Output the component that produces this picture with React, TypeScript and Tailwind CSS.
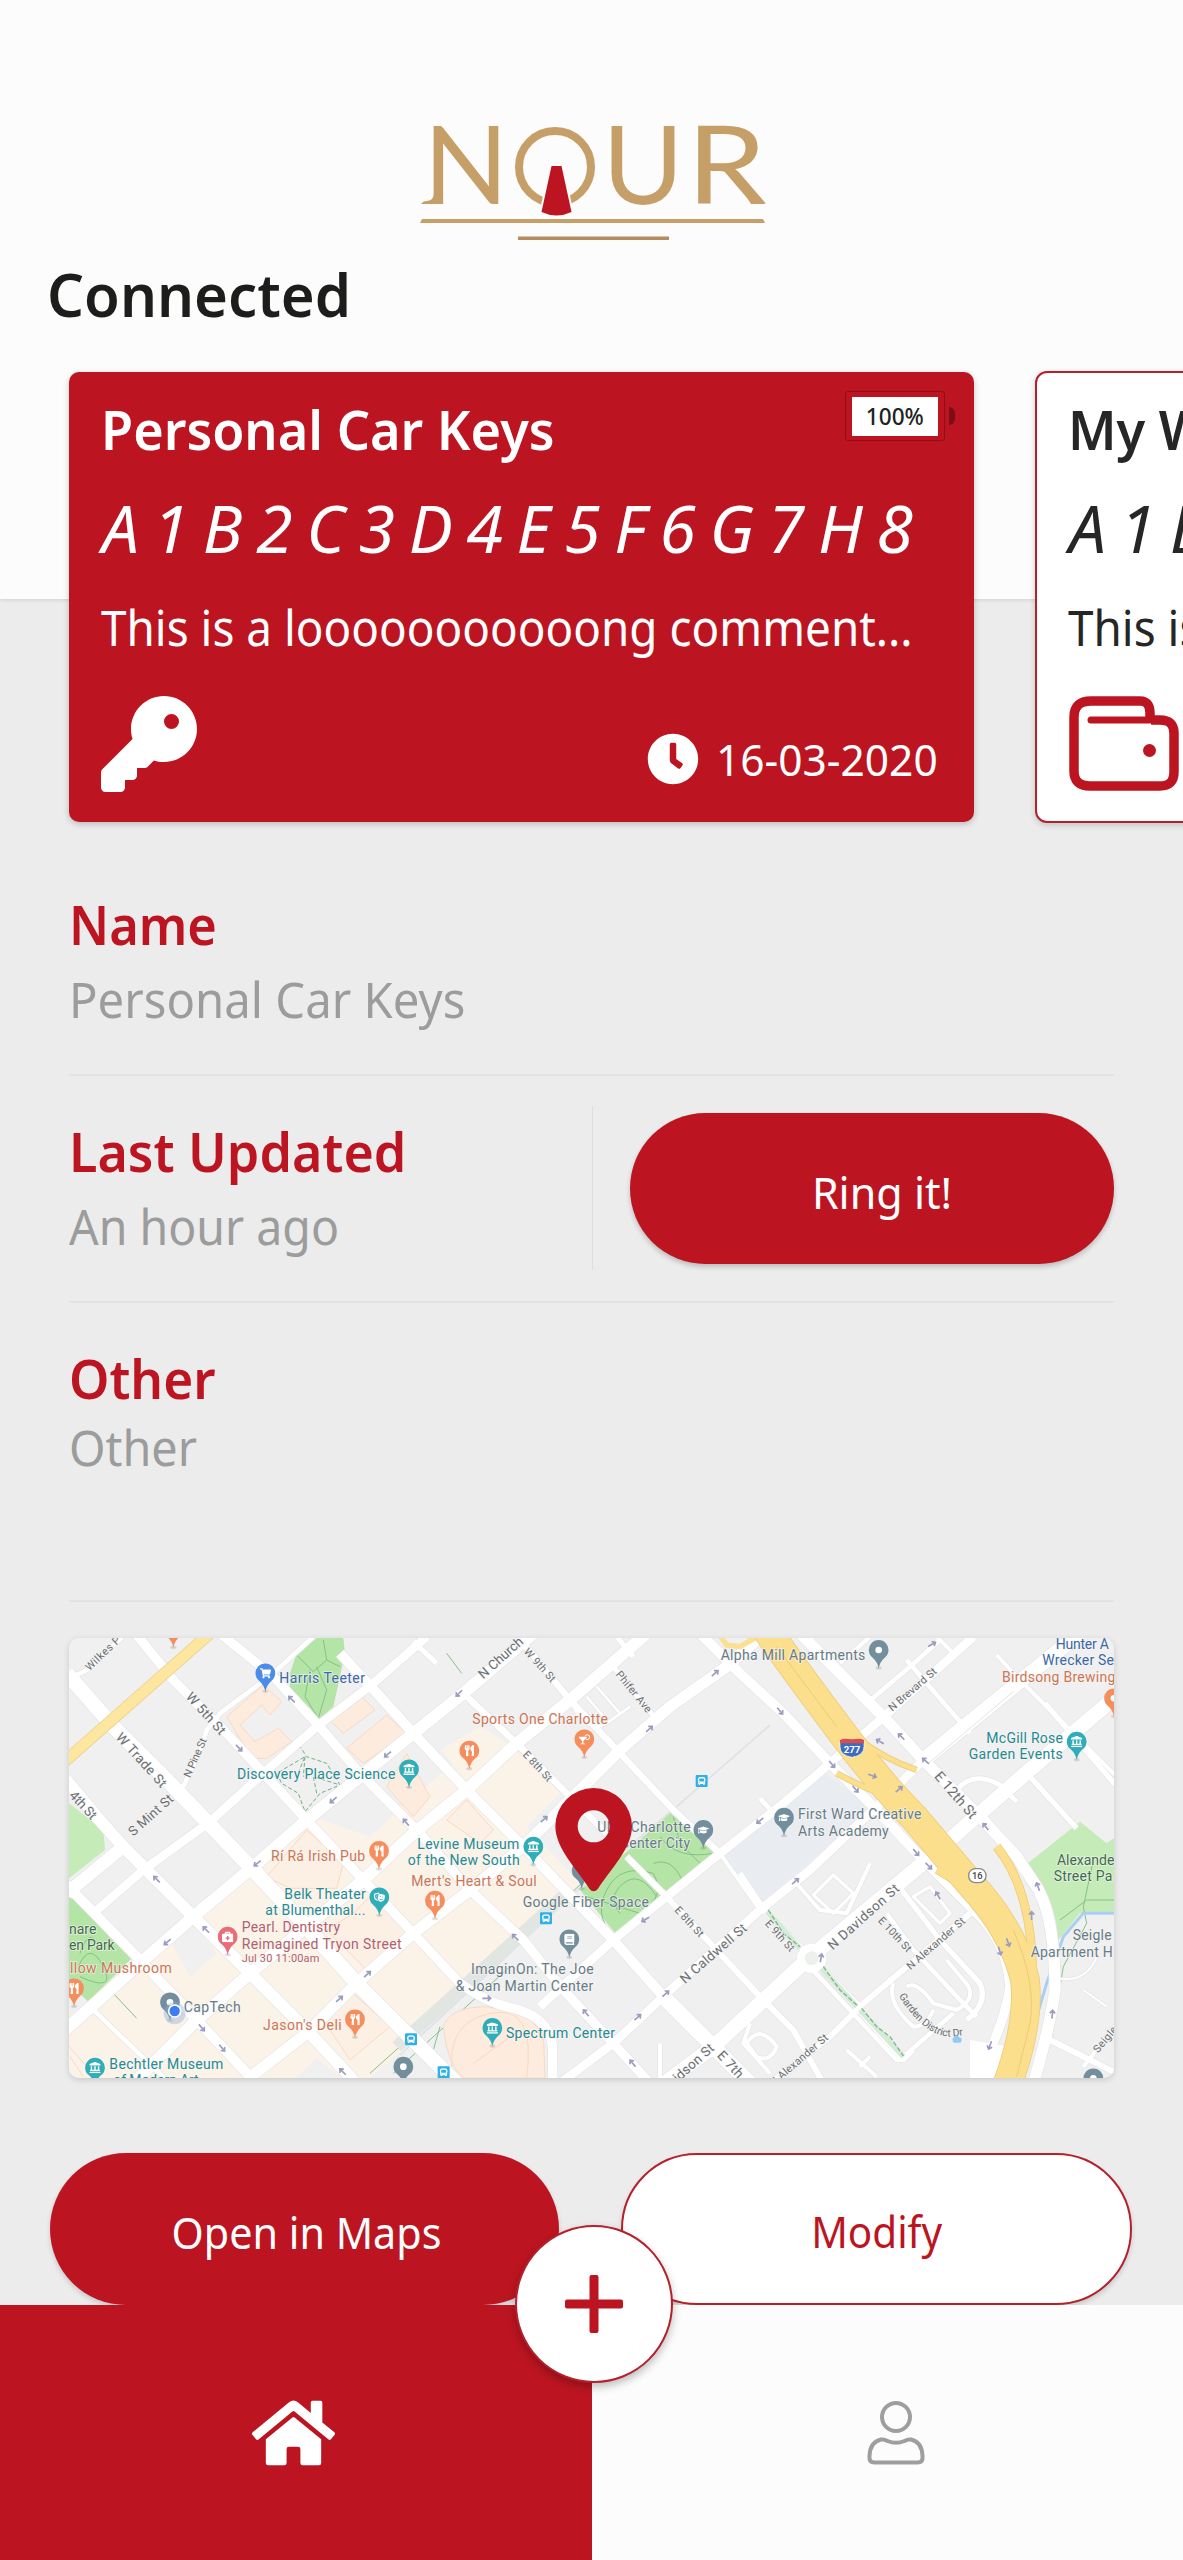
import type { ReactNode } from 'react';
import type { IconType } from 'react-icons';
import { FaBook, FaBriefcaseMedical, FaBus, FaClock, FaCocktail, FaGraduationCap, FaHome, FaLandmark, FaShoppingCart, FaTheaterMasks, FaUtensils } from 'react-icons/fa';
import { FaKey } from 'react-icons/fa6';

const GOLD = '#c69f68';
const RED = '#bc1521';

function Logo() {
  return (
    <svg viewBox="418 120 350 124" className="h-[124px] w-[350px]" fontFamily="Lato, sans-serif" fontSize="108" fill={GOLD}>
      <text x="423.5" y="204" textLength="85" lengthAdjust="spacingAndGlyphs">N</text>
      <circle cx="555" cy="167" r="36" fill="none" stroke={GOLD} strokeWidth="8" />
      <text x="602.5" y="204" textLength="81" lengthAdjust="spacingAndGlyphs">U</text>
      <text x="686.5" y="204" textLength="80" lengthAdjust="spacingAndGlyphs">R</text>
      <path d="M421 204q2-3 6-3 7-1 7-8v11z" />
      <path d="M746 196q6 5 12 5 6 0 7 3h-14z" />
      <path d="M551 166h10l10 46q-15 7-30 0z" transform="translate(.5 0)" fill={RED} stroke="#fcfcfc" strokeWidth="4" paintOrder="stroke" />
      <path d="M422 219h341l2 4h-345z" />
      <path d="M518 236.500h151v3.500h-151z" fill="#b58c60" />
    </svg>
  );
}

function WalletIcon() {
  return (
    <svg viewBox="0 0 110 96" className="ml-px h-[96px] w-[110px]" fill="none" stroke={RED} strokeWidth="9.500" strokeLinejoin="round">
      <path d="M81 25v-8q0-12-10-12H22Q5 5 5 21v54q0 15 16 15h70q14 0 14-14V37q0-13-14-13H82" />
      <path d="M22 24h70" strokeWidth="7" strokeLinecap="round" />
      <circle cx="80.500" cy="54.500" r="6.500" fill={RED} stroke="none" />
    </svg>
  );
}

function UserIcon() {
  return (
    <svg viewBox="0 0 58 64" className="h-[64px] w-[58px]" fill="none" stroke="#9e9e9e" strokeWidth="4">
      <circle cx="29" cy="16" r="14" />
      <path d="M14 38.500Q3 41 2.500 55v2q0 4.500 5 4.500h43q5 0 5-4.500v-2Q55 41 44 38.500q-3-.500-6.500 1.500-8.500 3.500-17 0Q17 38 14 38.500z" strokeLinejoin="round" />
    </svg>
  );
}

function Battery() {
  return (
    <div className="absolute left-[776px] top-[19px] flex items-center gap-1">
      <div className="flex h-[50px] w-[100px] items-center justify-center rounded-[3px] border border-[#8f0f19]">
        <div className="flex h-[39px] w-[86px] items-center justify-center bg-white text-[24px] font-medium leading-none text-[#222]">
          <span className="scale-x-[0.94]">100%</span>
        </div>
      </div>
      <div className="h-[18px] w-[6px] rounded-r-full bg-[#7d0e16]" />
    </div>
  );
}

interface CardProps {
  title: string;
  active?: boolean;
  icon: ReactNode;
}

function DeviceCard({ title, active, icon }: CardProps) {
  return (
    <article
      className={
        active
          ? 'relative mt-px h-[450px] w-[905px] shrink-0 rounded-[10px] bg-[#bc1521] pl-[32px] pr-[36px] pt-[29px] text-white shadow-[0_2px_6px_rgba(0,0,0,0.22)]'
          : 'relative h-[452px] w-[905px] shrink-0 rounded-[12px] border-2 border-[#b4202b] bg-white pl-[31px] pr-[36px] pt-[28px] text-[#262626] shadow-[0_2px_6px_rgba(0,0,0,0.18)]'
      }
    >
      <h2 className="w-max origin-left scale-x-[0.95] text-[55px] font-semibold leading-none">{title}</h2>
      <p className="ml-px mt-[38px] w-max text-[66px] italic leading-none tracking-[13.7px]">A1B2C3D4E5F6G7H8</p>
      <p className="mt-[43px] w-max origin-left scale-x-[0.936] text-[49px] leading-none">This is a looooooooooong comment...</p>
      <div className="mt-[44px] flex items-start justify-between">
        {icon}
        <div className="mt-[37px] flex items-center gap-[9px]">
          <FaClock className="size-[52px]" />
          <span className="origin-right scale-x-[0.965] text-[44px] leading-none">16-03-2020</span>
        </div>
      </div>
      {active && <Battery />}
    </article>
  );
}

const line = (d: string, w: number) => ({ d, w });

const ROADS = [
  line('M20 150L80 120 220 -10', 14),
  line('M210 -10L340 150 500 310 740 570 910 750 1060 910 1200 1060Q1280 1120 1360 1135 1475 1165 1478 1260V1360', 28),
  line('M20 130L160 290 340 470 570 710 730 880 890 1060 1060 1230 1200 1370', 44),
  line('M10 440L110 560 190 650 400 860 570 1030 740 1200 880 1350', 36),
  line('M10 755L240 990 410 1170 580 1350', 30),
  line('M90 1130L330 1360', 14),
  line('M370 470L425 350 440 300 480 250 640 130 760 20', 14),
  line('M480 10L640 140 770 280 900 430 1080 610 1230 780 1390 930 1510 1080 1660 1240 1770 1360', 28),
  line('M840 70L960 200 1060 310 1220 480 1380 640 1660 930 1810 1100', 30),
  line('M1810 1100L1960 1250 2070 1360', 46),
  line('M20 790L190 650', 38),
  line('M100 850L250 720 450 575 610 430 770 290 940 160 1100 20', 26),
  line('M10 1205L240 1000 400 860 580 710 740 570 1060 310 1210 190 1420 10', 36),
  line('M230 1350L400 1180 570 1030 740 890 910 750 1060 610 1220 480 1370 340 1530 210 1760 10', 36),
  line('M560 1350L740 1210 890 1060 1060 910 1230 780 1400 640 1680 360 1830 230 2000 110 2100 20', 34),
  line('M1440 1130L1660 930 1820 800 1980 670 2170 520 2310 400 2460 270 2640 110 2740 20', 26),
  line('M1500 1360L1660 1240 1820 1090 2100 840 2250 720 2450 530 2590 390', 26),
  line('M2590 390L2860 170 3060 10', 44),
  line('M1800 1370L1960 1250 2240 990 2600 690 2760 550 2920 410 3180 190', 44),
  line('M2130 1360L2310 1220 2410 1120 2730 850', 18),
  line('M2530 1280L2680 1150', 14),
  line('M2420 220L2550 110 2640 30', 14),
  line('M2340 100L2430 20', 12),
  line('M2630 20L2690 80', 12),
  line('M1060 35L1130 100', 16),
  line('M1210 190L1370 340 1540 510 1640 610', 20),
  line('M1700 680L1810 790 1960 950 2100 1100 2200 1200 2290 1360', 18),
  line('M1390 40L1530 210 1680 370 1840 540 1980 670', 20),
  line('M1660 110L1790 270', 14),
  line('M1670 20L1720 80', 16),
  line('M1980 670L2100 840', 12),
  line('M2040 730L2120 850 2250 980 2400 1130', 16),
  line('M1920 10L2040 130 2170 250 2310 400 2450 540 2590 690', 30),
  line('M2220 10L2330 120 2470 260 2590 390 2760 560 2870 680 2930 770Q2985 860 2985 1080 2970 1190 2920 1360', 34),
  line('M2590 690L2740 840Q2840 930 2850 1070 2830 1200 2740 1360', 28),
  line('M2280 1010L2530 1290', 16),
  line('M2240 1000L2510 1290 2530 1290 2560 1260', 14),
  line('M2540 90L2730 310', 14),
  line('M2810 75L2880 150 3180 450', 12),
  line('M2955 220L3180 480', 16),
  line('M2910 440L3050 595', 16),
  line('M2690 480Q2740 420 2820 465L2870 515', 14),
  line('M2100 505L2150 560', 14),
  line('M2200 750L2280 840 2360 850 2430 700', 12),
  line('M2510 760L2640 930 2760 1060Q2785 1120 2720 1170', 16),
  line('M2560 800L2610 770 2670 850 2640 880z', 10),
  line('M2480 850L2560 960 2710 1120 2750 1160', 14),
  line('M2500 1060Q2480 1120 2560 1190 2600 1190 2620 1140M2540 1070Q2570 1050 2620 1120L2690 1140Q2760 1100 2710 1050L2660 990', 12),
  line('M2260 795L2320 735 2380 790 2320 850z', 10),
  line('M2060 1240Q2100 1180 2150 1250 2130 1300 2090 1280z', 12),
  line('M2360 1260L2450 1340M2400 1310L2430 1280', 12),
  line('M1800 1344V1240M2070 1180L2050 1240 2130 1330', 12),
  line('M2970 1230L3170 1330', 18),
  line('M3070 1310L3180 1170', 12),
  line('M2990 1045Q3080 1060 3110 980M3070 1080L3140 1130', 6),
  line('M1540 230Q1580 310 1640 280L1710 230M1580 200L1640 270M1610 170L1680 250', 8),
];

const HIGHWAYS = [
  line('M2120 0Q2220 140 2340 300T2560 560L2730 760Q2860 900 2895 1050 2910 1180 2840 1370', 84),
  line('M2400 330Q2480 390 2570 420', 14),
  line('M2330 430Q2400 470 2490 500', 14),
  line('M2630 720Q2790 810 2850 960L2870 1060', 18),
  line('M2810 650Q2900 760 2915 960L2920 1050', 22),
];

const ARROWS: [number, number, number][] = [
  [695, 208, -135], [537, 354, 45], [983, 373, 140], [820, 510, 140], [1038, 577, -130], [592, 700, 140], [290, 748, -135],
  [438, 899, -135], [322, 936, 140], [922, 1033, -42], [838, 1107, -42], [425, 1193, 50], [486, 1254, 50], [848, 1325, -135],
  [1197, 190, 135], [1452, 568, -42], [1768, 297, -42], [1965, 130, -42], [2160, 243, 50], [2616, 43, -30], [2524, 320, -135],
  [2597, 393, -140], [2316, 403, 50], [2386, 477, 50], [2517, 478, -40], [2100, 572, 140], [2568, 667, 50], [2777, 590, -130],
  [1756, 868, 150], [1366, 922, -135], [1280, 1105, 0], [1578, 1149, -130], [1733, 1162, -42], [1817, 1091, -42], [1718, 1300, -130],
  [2206, 754, -40], [2606, 708, 45], [2934, 770, -110], [2819, 963, 75], [2283, 984, -80], [2977, 1153, -85], [2790, 1246, 110],
  [2634, 797, -120], [2844, 937, 70], [2915, 857, -90], [2460, 335, -150], [2437, 437, 20],
];

const STREETS: [string, number, number, number, number, number][] = [
  ['Wilkes P', 128, 70, -44, 132, 32],
  ['W 5th St', 438, 250, 48, 155, 40],
  ['W Trade St', 245, 390, 48, 205, 40],
  ['N Pine St', 405, 383, -66, 125, 32],
  ['4th St', 70, 525, 47, 100, 40],
  ['S Mint St', 272, 555, -42, 165, 40],
  ['N Church', 1322, 83, -42, 165, 40],
  ['W 9th St', 1440, 105, 48, 125, 32],
  ['Phifer Ave', 1722, 185, 51, 150, 32],
  ['E 8th St', 1433, 408, 47, 112, 32],
  ['N Brevard St', 2557, 178, -41, 180, 32],
  ['E 12th St', 2688, 495, 49, 170, 42],
  ['E 8th St', 1888, 875, 47, 112, 32],
  ['N Caldwell St', 1960, 970, -41, 250, 40],
  ['idson St', 1900, 1298, -42, 150, 40],
  ['E 7th', 2012, 1303, 47, 95, 40],
  ['E 9th St', 2160, 917, 48, 115, 32],
  ['N Davidson St', 2410, 860, -42, 272, 40],
  ['E 10th St', 2505, 913, 47, 130, 32],
  ['N Alexander St', 2627, 940, -41, 220, 32],
  ['N Alexander St', 2216, 1290, -41, 220, 32],
  ['Seigle', 3135, 1228, -50, 92, 32],
];

const TEAL = '#258a93';
const BRICK = '#cc7656';
const SLATE = '#667c88';
const BLUE = '#3a68a8';
const ROSE = '#b4606c';
const FOREST = '#3f6b4d';

/* text, left x, baseline y, width, colour, size */
const PLACES: [string, number, number, number, string, number][] = [
  ['Harris Teeter', 658, 160, 257, BLUE, 42],
  ['Discovery Place Science', 531, 448, 475, TEAL, 42],
  ['Rí Rá Irish Pub', 633, 694, 282, BRICK, 42],
  ['Belk Theater', 673, 806, 244, TEAL, 42],
  ['at Blumenthal...', 616, 855, 300, TEAL, 42],
  ['Pearl. Dentistry', 545, 907, 295, ROSE, 42],
  ['Reimagined Tryon Street', 545, 956, 480, ROSE, 42],
  ['Jul 30 11:00am', 545, 996, 233, ROSE, 33],
  ['nare', 27, 911, 82, FOREST, 42],
  ['en Park', 27, 960, 137, FOREST, 42],
  ['llow Mushroom', 30, 1030, 305, BRICK, 42],
  ['CapTech', 371, 1145, 171, SLATE, 42],
  ["Jason's Deli", 609, 1200, 236, BRICK, 42],
  ['Bechtler Museum', 148, 1318, 342, TEAL, 42],
  ['of Modern Art', 160, 1366, 256, TEAL, 42],
  ['Sports One Charlotte', 1237, 283, 407, BRICK, 42],
  ['Levine Museum', 1072, 656, 306, TEAL, 42],
  ['of the New South', 1043, 705, 336, TEAL, 42],
  ["Mert's Heart & Soul", 1054, 767, 376, BRICK, 42],
  ['UNC Charlotte', 1612, 605, 280, SLATE, 42],
  ['Center City', 1680, 653, 210, SLATE, 42],
  ['Google Fiber Space', 1388, 832, 379, SLATE, 42],
  ['ImaginOn: The Joe', 1233, 1033, 368, SLATE, 42],
  ['& Joan Martin Center', 1187, 1082, 413, SLATE, 42],
  ['Spectrum Center', 1338, 1224, 327, TEAL, 42],
  ['Alpha Mill Apartments', 1982, 90, 434, SLATE, 42],
  ['First Ward Creative', 2214, 568, 370, SLATE, 42],
  ['Arts Academy', 2214, 617, 272, SLATE, 42],
  ['McGill Rose', 2779, 339, 230, TEAL, 42],
  ['Garden Events', 2726, 388, 282, TEAL, 42],
  ['Hunter A', 2987, 57, 160, BLUE, 42],
  ['Wrecker Se', 2947, 106, 215, BLUE, 42],
  ['Birdsong Brewing', 2826, 156, 340, BRICK, 42],
  ['Alexande', 2991, 704, 172, FOREST, 42],
  ['Street Pa', 2981, 753, 176, FOREST, 42],
  ['Seigle', 3038, 931, 117, SLATE, 42],
  ['Apartment H', 2912, 980, 246, SLATE, 42],
];

const P_ORANGE = '#f58d5c';
const P_TEAL = '#2fadb9';
const P_SLATE = '#738f9e';

const PINS: [number, number, string, IconType | null][] = [
  [616, 130, '#4a8ce8', FaShoppingCart],
  [340, -2, P_ORANGE, null],
  [1047, 418, P_TEAL, FaLandmark],
  [957, 663, P_ORANGE, FaUtensils],
  [1228, 362, P_ORANGE, FaUtensils],
  [1573, 328, P_ORANGE, FaCocktail],
  [1420, 650, P_TEAL, FaLandmark],
  [1930, 600, P_SLATE, FaGraduationCap],
  [2456, 60, P_SLATE, null],
  [2172, 563, P_SLATE, FaGraduationCap],
  [3050, 335, P_TEAL, FaLandmark],
  [3162, 205, P_ORANGE, null],
  [958, 802, P_TEAL, FaTheaterMasks],
  [503, 920, '#e86d78', FaBriefcaseMedical],
  [42, 1075, P_ORANGE, FaUtensils],
  [330, 1117, P_SLATE, null],
  [105, 1313, P_TEAL, FaLandmark],
  [885, 1168, P_ORANGE, FaUtensils],
  [1030, 1310, P_SLATE, null],
  [1125, 812, P_ORANGE, FaUtensils],
  [1565, 722, P_SLATE, null],
  [1528, 928, P_SLATE, FaBook],
  [1297, 1194, P_TEAL, FaLandmark],
  [3100, 1345, P_SLATE, null],
];

function CityMap() {
  return (
    <svg viewBox="27 24 3135 1320" className="h-[440px] w-[1045px]" fontFamily="Roboto, sans-serif">
      <rect x="27" y="24" width="3135" height="1320" fill="#f0f0f1" />
      {/* downtown blocks and campus */}
      <path d="M27 1195L240 990 430 840 600 690 760 560 930 620 1060 500 1180 400 1140 360 1260 290 1345 340 1500 490 1400 590 1560 760 1020 1265 930 1344H27z" fill="#fbf3e8" />
      <path d="M330 930L400 880 470 970 390 1040z" fill="#f0f0f1" />
      <path d="M770 1285L850 1350H700z" fill="#f0f0f1" />
      <path d="M2270 410L2440 540 2090 830 1980 690z" fill="#e9edf2" />
      {/* parks */}
      <g fill="#c4ebb8">
        <path d="M710 70L770 24H850L855 70 820 230 775 270 690 180 690 130z" fill="#b5e5a6" />
        <path d="M27 520L130 600 135 660 27 745z" />
        <path d="M27 790L215 985 85 1115 27 1060z" fill="#b5e5a6" />
        <path d="M1560 780L1670 915 1980 670 1840 540 1700 665z" fill="#b5e5a6" />
        <path d="M2890 710L3060 575 3140 640 3162 625V850L3060 850 2995 930Q2985 780 2890 710z" />
      </g>
      <g fill="none" stroke="#83c186" strokeWidth="3">
        <path d="M710 75L760 125 800 90 840 110M775 265L735 200 750 120M800 90L790 30M775 265L800 180 770 110" />
        <path d="M1660 910Q1600 860 1640 780T1780 730Q1820 800 1740 850L1580 800M1680 850Q1640 800 1690 760T1790 800M1840 560L1860 640 1920 700M1800 620Q1850 690 1960 670M1780 700Q1840 680 1870 760" />
        <path d="M60 970Q90 880 120 960M55 1010Q90 930 130 1010T60 1040M160 1090L230 1165" />
        <path d="M717 345L740 380 800 400 840 465 780 490 735 545 715 490 665 460 650 430 735 380 710 440M770 490L760 440 840 465M735 380L730 440" strokeDasharray="12 7" stroke="#6fae7f" />
        <path d="M3162 810H3080L3000 870M3100 690L3070 830 3080 880 3010 1010 2975 1220" />
        <path d="M930 1330L1560 765M1000 1330L1350 1010M1140 1190L1120 1260M1160 70L1205 130" />
      </g>
      <path d="M1020 1275L1570 765M1570 765L1850 530 2130 285" fill="none" stroke="#dfe2e0" strokeWidth="5" />
      <path d="M1010 1250L1520 790" stroke="#e2e6e2" strokeWidth="38" />
      <path d="M3162 850H3070L3010 920 2960 1060 2930 1160" fill="none" stroke="#a9cff5" strokeWidth="9" />
      {/* landmark buildings */}
      <g fill="#fdebdd" stroke="#fad9c2" strokeWidth="3">
        <path d="M500 260L610 165 665 215 630 255 605 225 540 285 585 335 655 295 695 335 620 385 575 385z" />
        <path d="M810 270L900 195 945 240 850 310z" />
        <path d="M860 355L980 255 1040 310 910 400z" />
        <path d="M980 470L1040 370 1110 500 1060 560z" />
        <path d="M620 740L740 600 850 700 830 775 690 775z" fill="#fcefe3" />
        <path d="M1160 570L1220 510 1300 600 1260 640z" fill="#fcefe3" />
        <path d="M880 850L940 790 1050 900 920 1020 800 900z" fill="#fcefe3" />
        <path d="M790 1170L880 1090 990 1190 870 1290z" fill="#fcefe3" />
        <path d="M1150 1190Q1170 1130 1280 1130L1390 1150 1450 1210 1455 1344H1210Q1160 1300 1150 1190z" />
        <path d="M1180 1344Q1150 1180 1290 1150T1400 1344M1240 1300L1380 1200" fill="none" />
        <path d="M27 1250L90 1320M30 1280L70 1340" fill="none" />
      </g>
      {/* streets */}
      <g fill="none" strokeLinejoin="round">
        {ROADS.map((r, i) => <path key={i} d={r.d} strokeWidth={r.w + 4} stroke="#e4e4e7" />)}
        {ROADS.map((r, i) => <path key={i} d={r.d} strokeWidth={r.w} stroke="#fff" />)}
        <path d="M2730 1230L2850 1250 2800 1344H2730z" fill="#fff" />
        <path d="M2605 400L2860 185" stroke="#e8e4da" strokeWidth="3" />
        <circle cx="2255" cy="985" r="32" fill="#eef0ee" stroke="#fff" strokeWidth="22" />
        <path d="M2285 1015L2390 1130M2400 1140L2530 1280M2120 845L2220 955" stroke="#d5ebd6" strokeWidth="16" />
        <path d="M2290 1010L2340 1080 2390 1125M2405 1135L2450 1190 2490 1220 2530 1278M2125 840L2170 910 2220 950" stroke="#7fb58c" strokeWidth="4" strokeDasharray="14 6" />
        <path d="M10 398L450 10" stroke="#ecd38a" strokeWidth="36" />
        <path d="M10 398L450 10" stroke="#fce6a0" strokeWidth="31" />
        <path d="M1975 10L2000 45 2040 50 2090 20" stroke="#fbe092" strokeWidth="16" />
        {HIGHWAYS.map((r, i) => <path key={i} d={r.d} strokeWidth={r.w + 5} stroke="#edcb79" />)}
        {HIGHWAYS.map((r, i) => <path key={i} d={r.d} strokeWidth={r.w} stroke="#fbdf8c" />)}
        <path d="M2150 50L2330 290M2860 900Q2930 1060 2910 1180L2870 1340" stroke="#edcb79" strokeWidth="3" />
      </g>
      <g stroke="#9a9cc0" strokeWidth="5" fill="none">
        {ARROWS.map(([x, y, a], i) => <path key={i} d="M-13 0H11M3 -8L12 0 3 8" transform={`translate(${x} ${y}) rotate(${a})`} />)}
      </g>
      {/* labels */}
      <g fill="#6b6e71" stroke="#f4f4f4" strokeWidth="5" strokeOpacity=".75" paintOrder="stroke" textAnchor="middle">
        {STREETS.map(([t, x, y, a, w, s]) => (
          <text key={t + x} transform={`translate(${x} ${y}) rotate(${a})`} y={s * 0.35} fontSize={s} textLength={w}>{t}</text>
        ))}
      </g>
      <path id="garden" d="M2516 1098Q2590 1212 2660 1219 2700 1222 2745 1205" fill="none" />
      <text fill="#6b6e71" fontSize="31"><textPath href="#garden">Garden District Dr</textPath></text>
      {PINS.map(([x, y, c, Icon], i) => (
        <g key={i}>
          <ellipse cx={x} cy={y + 54} rx="9" ry="5" fill="#000" opacity=".12" />
          <path d="M0 56Q-3 36-18 23A29.500 29.500 0 1 1 18 23Q3 36 0 56z" transform={`translate(${x} ${y})`} fill={c} />
          {Icon ? <Icon x={x - 17} y={y - 17} size={34} color="#fff" /> : <circle cx={x} cy={y} r="10" fill="#fff" />}
        </g>
      ))}
      <circle cx="344" cy="1150" r="33" fill="#8fa9dc" opacity=".4" />
      <circle cx="344" cy="1143" r="18" fill="#3b7ef0" stroke="#fff" strokeWidth="5" />
      <g strokeWidth="5" strokeOpacity=".7" stroke="#f8f6f3" paintOrder="stroke">
        {PLACES.map(([t, x, y, w, c, s]) => (
          <text key={t + x} x={x} y={y} textLength={w} fill={c} fontSize={s}>{t}</text>
        ))}
      </g>
      {[[1925, 453], [1458, 865], [1053, 1228], [1151, 1327]].map(([x, y]) => (
        <g key={x}>
          <rect x={x - 18} y={y - 18} width="36" height="36" rx="3" fill="#31b0e8" />
          <FaBus x={x - 12} y={y - 12} size={24} color="#fff" />
        </g>
      ))}
      <g>
        <path d="M2340 332Q2350 326 2376 330 2402 326 2412 332V350Q2412 376 2376 382 2340 376 2340 350z" fill="#3c6cc0" stroke="#fff" strokeWidth="2" />
        <path d="M2340 330Q2350 324 2376 328 2402 324 2412 330V340H2340z" fill="#d84e50" />
        <text x="2376" y="370" fill="#fff" fontSize="29" fontWeight="700" textAnchor="middle">277</text>
        <rect x="2726" y="716" width="52" height="42" rx="20" fill="#fff" stroke="#8a8a8a" strokeWidth="4" />
        <text x="2752" y="747" fill="#444" fontSize="28" fontWeight="500" textAnchor="middle">16</text>
      </g>
      <path d="M2683 1220q8-8 15 2 12 2 4 16h-20q-10-10 1-18z" fill="#90caf5" />
      {/* selected device */}
      <path fillRule="evenodd" d="M1601 474A115 115 0 0 1 1716 589C1716 655 1650 720 1614 776Q1601 791 1588 776C1552 720 1486 655 1486 589A115 115 0 0 1 1601 474zM1601 541A48 48 0 1 0 1601 637 48 48 0 1 0 1601 541z" fill={RED} />
    </svg>
  );
}

export default function App() {
  return (
    <div className="relative flex h-[2560px] w-[1183px] flex-col overflow-hidden bg-[#ececec] font-['Noto_Sans',sans-serif]">
      <header className="flex h-[599px] shrink-0 flex-col bg-[#fcfcfc] pt-[120px] shadow-[0_1px_4px_rgba(0,0,0,0.12)]">
        <div className="ml-[418px]"><Logo /></div>
        <h1 className="ml-[47px] mt-[20px] w-max origin-left scale-x-[0.968] text-[60px] font-semibold leading-none text-[#1d1d1b]">Connected</h1>
        <div className="ml-[69px] mt-[47px] flex gap-[61px]">
          <DeviceCard title="Personal Car Keys" active icon={<FaKey className="size-[96px]" />} />
          <DeviceCard title="My Wallet" icon={<WalletIcon />} />
        </div>
      </header>

      <main className="mt-[224px] flex flex-col px-[69px]">
        <section className="h-[253px] border-b-2 border-[#e3e3e3] pt-[73px]">
          <h3 className="w-max origin-left scale-x-[0.92] text-[55px] font-semibold leading-none text-[#bc1521]">Name</h3>
          <p className="mt-[24px] w-max origin-left scale-x-[0.965] text-[49px] leading-none text-[#9c9c9c]">Personal Car Keys</p>
        </section>
        <section className="flex h-[227px] border-b-2 border-[#e3e3e3]">
          <div className="w-[523px] pt-[47px]">
            <h3 className="w-max origin-left scale-x-[0.945] text-[55px] font-semibold leading-none text-[#bc1521]">Last Updated</h3>
            <p className="mt-[24px] w-max origin-left scale-x-[0.948] text-[49px] leading-none text-[#9c9c9c]">An hour ago</p>
          </div>
          <div className="mt-[30px] h-[164px] w-px bg-[#dedede]" />
          <button className="ml-[37px] mt-[37px] h-[151px] w-[484px] rounded-full bg-[#bc1521] pl-[20px] pt-[8px] text-[43px] leading-none text-white shadow-[0_3px_5px_rgba(0,0,0,0.2)]">Ring it!</button>
        </section>
        <section className="h-[299px] border-b-2 border-[#e3e3e3] pt-[47px]">
          <h3 className="w-max origin-left scale-x-[0.935] text-[55px] font-semibold leading-none text-[#bc1521]">Other</h3>
          <p className="mt-[18px] w-max origin-left scale-x-[0.955] text-[49px] leading-none text-[#9c9c9c]">Other</p>
        </section>
        <div className="mt-[36px] h-[440px] overflow-hidden rounded-[10px] shadow-[0_2px_6px_rgba(0,0,0,0.15)]">
          <CityMap />
        </div>
        <div className="-ml-[19px] mt-[75px] flex gap-[62px]">
          <button className="h-[152px] w-[509px] shrink-0 rounded-full bg-[#bc1521] pl-[4px] pt-[6px] text-[43px] leading-none text-white shadow-[0_3px_5px_rgba(0,0,0,0.15)]">
            <span className="inline-block scale-x-[0.96]">Open in Maps</span>
          </button>
          <button className="h-[152px] w-[511px] shrink-0 rounded-full border-2 border-[#b4202b] bg-white pt-[5px] text-[43px] leading-none text-[#bc1521] shadow-[0_3px_5px_rgba(0,0,0,0.15)]">
            <span className="inline-block scale-x-[0.94]">Modify</span>
          </button>
        </div>
      </main>

      <nav className="relative flex h-[255px] shrink-0">
        <a className="flex w-[592px] justify-center bg-[#bc1521] pr-[6px] pt-[91px] text-white"><FaHome className="h-[74px] w-[83px]" /></a>
        <a className="flex w-[591px] justify-center bg-[#fcfcfc] pl-[16px] pt-[96px]"><UserIcon /></a>
        <button className="absolute -top-[80px] left-[515px] flex size-[158px] items-center justify-center rounded-full border-2 border-[#b4202b] bg-white shadow-[0_4px_8px_rgba(0,0,0,0.25)]">
          <svg viewBox="0 0 58 58" className="size-[58px]" fill={RED}>
            <rect x="24.500" width="9" height="58" rx="2" />
            <rect y="24.500" width="58" height="9" rx="2" />
          </svg>
        </button>
      </nav>
    </div>
  );
}
